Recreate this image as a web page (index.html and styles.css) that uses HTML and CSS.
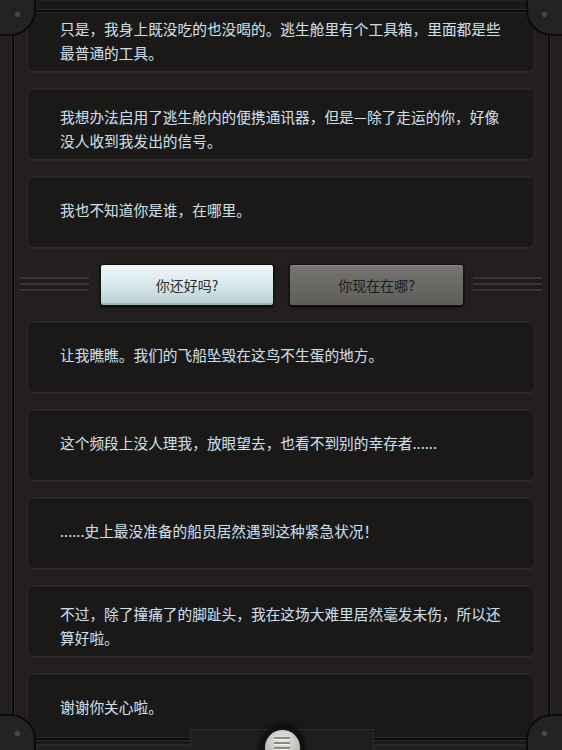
FILE: index.html
```html
<html>

<head>
    <link rel="stylesheet" href="styles.css">
</head>

<body>
    <div class="screen">
        <div class="feed">
            <div class="card wrap">只是，我身上既没吃的也没喝的。逃生舱里有个工具箱，里面都是些最普通的工具。</div>
            <div class="card wrap">我想办法启用了逃生舱内的便携通讯器，但是—除了走运的你，好像没人收到我发出的信号。</div>
            <div class="card">我也不知道你是谁，在哪里。</div>
            <div class="choices">
                <div class="rail"></div>
                <button class="choice picked">你还好吗?</button>
                <button class="choice">你现在在哪?</button>
                <div class="rail"></div>
            </div>
            <div class="card">让我瞧瞧。我们的飞船坠毁在这鸟不生蛋的地方。</div>
            <div class="card">这个频段上没人理我，放眼望去，也看不到别的幸存者......</div>
            <div class="card">......史上最没准备的船员居然遇到这种紧急状况！</div>
            <div class="card wrap">不过，除了撞痛了的脚趾头，我在这场大难里居然毫发未伤，所以还算好啦。</div>
            <div class="card">谢谢你关心啦。</div>
        </div>

        <div class="bezel"></div>
        <div class="corner tl"><span class="screw"></span></div>
        <div class="corner tr"><span class="screw"></span></div>
        <div class="corner bl"><span class="screw"></span></div>
        <div class="corner br"><span class="screw"></span></div>

        <div class="dock">
            <div class="menu-btn">
                <span></span><span></span><span></span>
            </div>
        </div>
    </div>
</body>

</html>
```

FILE: styles.css
```css
body {
    margin: 0;
    background: #1d1c1b;
    font-family: "Noto Sans CJK SC", "Noto Sans", sans-serif;
}

.screen {
    position: relative;
    width: 562px;
    height: 750px;
    overflow: hidden;
    background: #221f1e;
}

.feed {
    display: flex;
    flex-direction: column;
    gap: 16px;
    padding: 0 27px;
}

.card {
    display: flex;
    align-items: center;
    box-sizing: border-box;
    min-height: 72px;
    padding: 0 32px 4px;
    background: #1a1918;
    border: 1px solid #2b2a28;
    border-radius: 6px;
    box-shadow: inset 0 1px 0 #242321, 0 1px 0 #2a2826;
    color: #cddce3;
    font-size: 14.7px;
    line-height: 24px;
    text-shadow: 0 0 1px rgba(120, 170, 200, 0.3);
}

.card.wrap {
    padding-top: 10px;
    padding-bottom: 0;
}

.card:first-child {
    margin-top: -1px;
    min-height: 73px;
}

.choices {
    display: flex;
    align-items: center;
    gap: 11px;
    height: 41px;
    margin: 0 -7px;
}

.rail {
    flex: 1;
    height: 15px;
    background: repeating-linear-gradient(to bottom,
            #393735 0px, #393735 2px,
            #1d1c1b 2px, #1d1c1b 6px);
}

.rail:last-child {
    margin-left: -2px;
}

.choice {
    width: 175px;
    height: 42px;
    margin-left: 4px;
    border: 1px solid #111;
    border-radius: 3px;
    background: linear-gradient(to bottom, #757471 0%, #5f5e5b 100%);
    box-shadow: inset 0 1px 0 #8a8986, 0 1px 2px #000;
    color: #1c1c1c;
    font-family: "Noto Sans CJK SC", sans-serif;
    font-size: 14px;
    padding: 0;
}

.choice.picked {
    width: 174px;
    margin-left: 0;
    background: linear-gradient(to bottom, #eef8fa 0%, #d5e6ea 55%, #b8ccd1 100%);
    box-shadow: inset 0 -2px 0 #9fb4ba, 0 1px 2px #000;
    color: #2e2e2e;
}

.bezel {
    position: absolute;
    top: 10px;
    left: 12px;
    right: 12px;
    bottom: 10px;
    border: 2px solid #0b0b0b;
    border-radius: 4px;
    box-shadow: 0 0 0 1px #2e2c2a, inset 0 0 0 1px #2a2826;
    pointer-events: none;
}

.corner {
    position: absolute;
    width: 34px;
    height: 34px;
    background: #252321;
    pointer-events: none;
}

.corner.tl {
    top: 0;
    left: 0;
    border-bottom-right-radius: 26px;
    border-right: 2px solid #0b0b0b;
    border-bottom: 2px solid #0b0b0b;
}

.corner.tr {
    top: 0;
    right: 0;
    border-bottom-left-radius: 26px;
    border-left: 2px solid #0b0b0b;
    border-bottom: 2px solid #0b0b0b;
}

.corner.bl {
    bottom: 0;
    left: 0;
    border-top-right-radius: 26px;
    border-right: 2px solid #0b0b0b;
    border-top: 2px solid #0b0b0b;
}

.corner.br {
    bottom: 0;
    right: 0;
    border-top-left-radius: 26px;
    border-left: 2px solid #0b0b0b;
    border-top: 2px solid #0b0b0b;
}

.screw {
    position: absolute;
    width: 9px;
    height: 9px;
    border-radius: 50%;
    background: radial-gradient(circle at 50% 50%, #4a4845 0 2px, #2c2a28 3px, #1a1918 5px);
}

.tl .screw { top: 10px; left: 13px; }
.tr .screw { top: 10px; right: 13px; }
.bl .screw { bottom: 12px; left: 13px; }
.br .screw { bottom: 12px; right: 13px; }

.dock {
    position: absolute;
    left: 190px;
    bottom: 0;
    width: 182px;
    height: 20px;
    background: #1f1e1d;
    border: 1px solid #2e2c2a;
    border-bottom: none;
    display: flex;
    justify-content: center;
}

.menu-btn {
    width: 35px;
    height: 35px;
    margin-top: 0;
    border-radius: 50%;
    background: radial-gradient(circle at 50% 30%, #e8e8e6 0%, #bdbcb9 60%, #8d8c89 100%);
    box-shadow: 0 0 0 3px #141312, 0 0 6px 4px #000;
    display: flex;
    flex-direction: column;
    align-items: center;
    gap: 2px;
    padding-top: 7px;
    box-sizing: border-box;
}

.menu-btn span {
    width: 16px;
    height: 2px;
    background: #8a8986;
    border-bottom: 1px solid #f4f4f2;
}
```
